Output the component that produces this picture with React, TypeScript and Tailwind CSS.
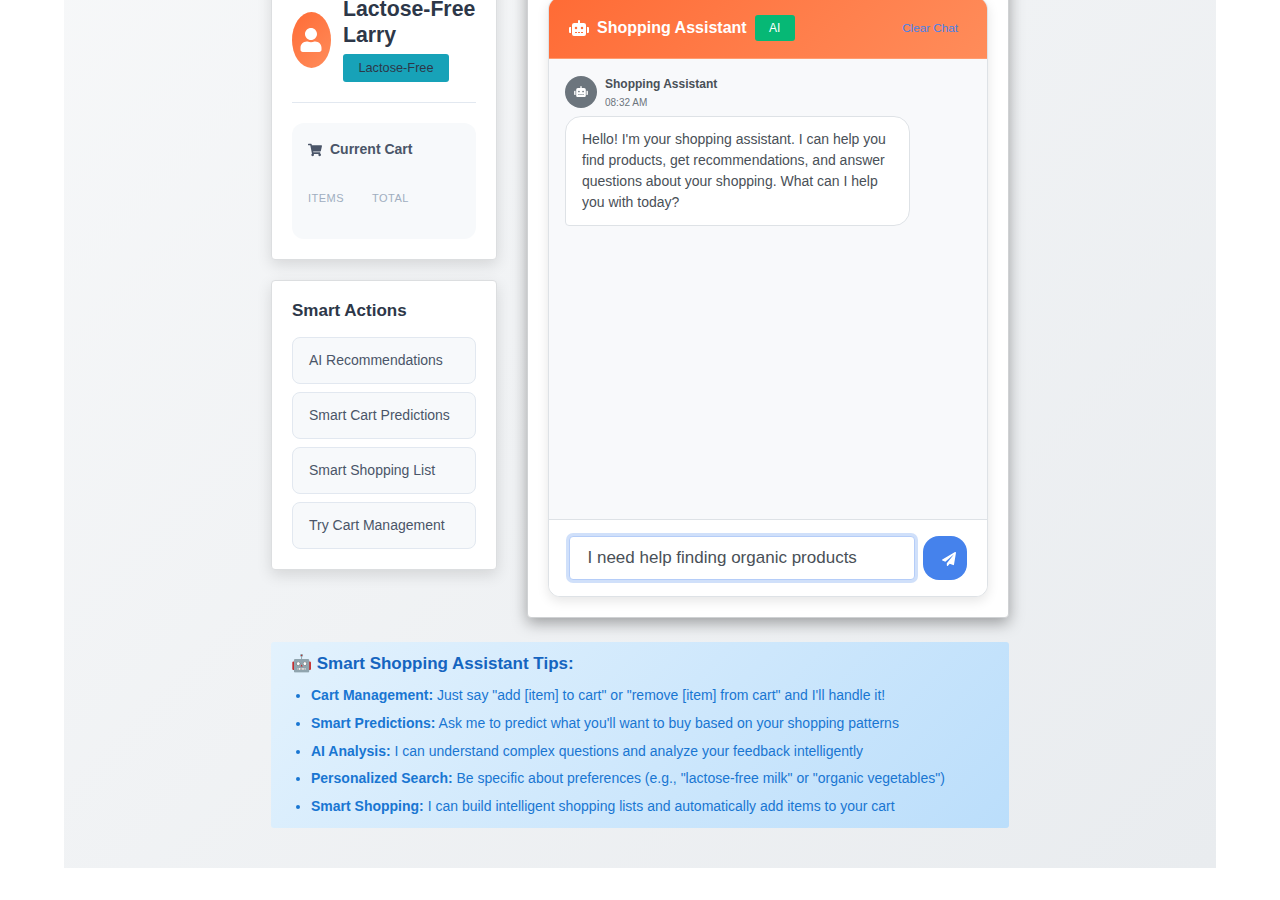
import { FaPaperPlane, FaRobot, FaShoppingCart, FaUser } from "react-icons/fa";

const actions = [
  "AI Recommendations",
  "Smart Cart Predictions",
  "Smart Shopping List",
  "Try Cart Management",
];

const tips = [
  { title: "Cart Management:", text: 'Just say "add [item] to cart" or "remove [item] from cart" and I\'ll handle it!' },
  { title: "Smart Predictions:", text: "Ask me to predict what you'll want to buy based on your shopping patterns" },
  { title: "AI Analysis:", text: "I can understand complex questions and analyze your feedback intelligently" },
  { title: "Personalized Search:", text: 'Be specific about preferences (e.g., "lactose-free milk" or "organic vegetables")' },
  { title: "Smart Shopping:", text: "I can build intelligent shopping lists and automatically add items to your cart" },
];

function ProfileCard() {
  return (
    <section className="flex h-[284px] flex-col justify-end rounded-[4px] border border-[#dcdee0] bg-white p-5 shadow-[0_5px_15px_rgba(0,0,0,0.12)]">
      <div className="flex shrink-0 items-center gap-3 border-b border-[#e2e8f0] pb-5">
        <div className="flex h-14 w-[39px] shrink-0 items-center justify-center rounded-[50%] bg-linear-135 from-[#ff6b35] to-[#ff8c5a] pr-px text-white">
          <FaUser className="h-6 w-[22px]" />
        </div>
        <div>
          <h3 className="text-[21.25px] leading-[25.6px] font-bold text-[#2d3748]">Lactose-Free Larry</h3>
          <span className="mt-[5.8px] flex h-7 w-[106px] items-center justify-center rounded-[3px] bg-[#17a2b8] text-[12.75px] text-[#2d3748]">
            Lactose-Free
          </span>
        </div>
      </div>
      <div className="mt-5 h-[116px] shrink-0 rounded-xl bg-[#f7f9fb] p-4">
        <h4 className="flex items-center gap-2 text-sm leading-5 font-bold text-[#4a5568]">
          <FaShoppingCart className="mt-px h-3.5 w-3.5" />
          Current Cart
        </h4>
        <div className="mt-[31px] flex text-[11px] leading-4 tracking-[0.5px] text-[#a0aec0]">
          <span className="w-16">ITEMS</span>
          <span>TOTAL</span>
        </div>
      </div>
    </section>
  );
}

function ActionsCard() {
  return (
    <section className="mt-5 h-[290px] rounded-[4px] border border-[#dcdee0] bg-white px-5 pt-[17px] shadow-[0_5px_15px_rgba(0,0,0,0.12)]">
      <h3 className="text-[17px] leading-[25px] font-bold text-[#2d3748]">Smart Actions</h3>
      <div className="mt-[14px] flex flex-col gap-2">
        {actions.map((label) => (
          <button
            key={label}
            className="h-[47px] rounded-lg border border-[#e2e8f0] bg-[#f7f9fb] px-4 text-left text-[14px] text-[#4a5568]"
          >
            {label}
          </button>
        ))}
      </div>
    </section>
  );
}

function ChatCard() {
  return (
    <section className="h-[642px] w-[482px] rounded-[4px] border border-[#d0d2d4] bg-white p-5 shadow-[0_5px_15px_rgba(0,0,0,0.35)]">
      <div className="flex h-full flex-col overflow-hidden rounded-xl border border-[#dee2e6] bg-white shadow-[0_4px_12px_rgba(0,0,0,0.1)]">
        <header className="flex h-[61px] shrink-0 items-center border-b border-[#ff9c70] bg-linear-135 from-[#ff6b35] to-[#ff8c5a] pr-[29px] pl-5">
          <FaRobot className="h-4 w-5 text-white" />
          <h2 className="ml-2 text-base font-bold text-white">Shopping Assistant</h2>
          <span className="ml-2 flex h-[26px] w-10 items-center justify-center rounded-[3px] bg-[#06b875] text-[12px] text-white">
            AI
          </span>
          <button className="ml-auto pb-px text-[11.7px] text-[#4582ec]">Clear Chat</button>
        </header>
        <div className="grow bg-[#f8f9fb] px-4 pt-[14px]">
          <div className="flex items-start gap-2">
            <div className="mt-[3px] flex h-8 w-8 items-center justify-center rounded-full bg-[#6c757d] pb-px text-white">
              <FaRobot className="h-[11px] w-[14px]" />
            </div>
            <div className="pt-[2px]">
              <p className="text-[12px] leading-[18px] font-bold text-[#495057]">Shopping Assistant</p>
              <p className="pt-px text-[10px] leading-[18px] text-[#6c757d]">08:32 AM</p>
            </div>
          </div>
          <p className="mt-1 h-[110px] w-[345px] rounded-2xl rounded-bl-[4px] border border-[#dee2e6] bg-white px-4 pt-3 text-[14px] leading-[21px] text-[#495057]">
            Hello! I'm your shopping assistant. I can help you find products, get recommendations, and answer questions
            about your shopping. What can I help you with today?
          </p>
        </div>
        <footer className="flex h-[77px] shrink-0 gap-2 border-t border-[#dee2e6] bg-white px-5 pt-4">
          <input
            defaultValue="I need help finding organic products"
            className="h-11 w-[346px] rounded-[4px] border border-[#b5cdf8] bg-white px-[17.5px] text-[17px] text-[#495057] shadow-[0_0_0_3px_rgba(69,130,236,0.25)] outline-none"
          />
          <button className="flex h-11 w-11 items-center justify-end rounded-2xl bg-[#4582ec] pt-px pr-[11px] text-white">
            <FaPaperPlane className="h-[14px] w-[14px]" />
          </button>
        </footer>
      </div>
    </section>
  );
}

export default function App() {
  return (
    <div className="h-[900px] overflow-hidden bg-white font-['Liberation_Sans',sans-serif]">
      <main className="mx-16 flex h-[868px] flex-col overflow-hidden bg-linear-135 from-[#f8f9fa] to-[#e9ecef] bg-[length:100%_1168px] bg-bottom px-[207px]">
        <div className="-mt-6 flex h-[642px] shrink-0 items-start gap-[30px]">
          <aside className="w-[226px]">
            <ProfileCard />
            <ActionsCard />
          </aside>
          <ChatCard />
        </div>
        <section className="mt-6 h-[186px] shrink-0 rounded-[3px] bg-linear-135 from-[#e3f2fd] to-[#bbdefb] px-5 pt-[10px]">
          <h3 className="text-[17px] leading-6 font-bold text-[#1565c0]">🤖 Smart Shopping Assistant Tips:</h3>
          <ul className="mt-[6px] list-disc pl-5 text-[14px] leading-[27.75px] text-[#1976d2]">
            {tips.map((tip) => (
              <li key={tip.title}>
                <strong className="font-bold">{tip.title}</strong> {tip.text}
              </li>
            ))}
          </ul>
        </section>
      </main>
    </div>
  );
}
